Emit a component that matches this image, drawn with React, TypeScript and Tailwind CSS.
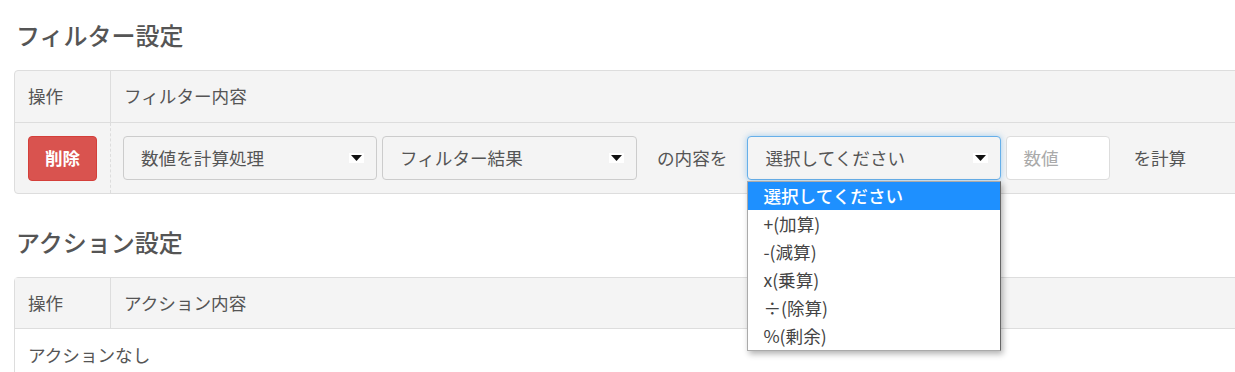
import React from "react";

const Arrow: React.FC = () => (
  <span className="flex h-[10px] w-[15px] items-center justify-center bg-white">
    <svg width="11" height="6" viewBox="0 0 11 6">
      <path d="M0 0 L11 0 L5.5 6 Z" fill="#111" />
    </svg>
  </span>
);

const Select: React.FC<{ label: string; width: string; focused?: boolean }> = ({ label, width, focused }) => (
  <div
    className={
      focused
        ? `flex h-[44px] ${width} items-center justify-between rounded-[4px] border border-[#66afe9] bg-[#f4f4f4] pl-[17px] pr-[12px] shadow-[0_0_6px_rgba(102,175,233,0.6)]`
        : `flex h-[44px] ${width} items-center justify-between rounded-[4px] border border-[#ccc] bg-[#f4f4f4] pl-[17px] pr-[12px]`
    }
  >
    <span>{label}</span>
    <Arrow />
  </div>
);

const options = ["選択してください", "+(加算)", "-(減算)", "x(乗算)", "÷(除算)", "%(剰余)"];

const App: React.FC = () => {
  return (
    <div className="h-[372px] w-[1235px] overflow-hidden bg-white font-['Noto_Sans_CJK_JP','Noto_Sans',sans-serif] text-[17.6px] text-[#555]">
      <div className="pl-[14px] pt-[22px]">
        {/* フィルター設定 */}
        <h2 className="pl-[2px] text-[24px] font-medium leading-[26px] text-[#555]">フィルター設定</h2>

        <div className="mt-[22px] w-[1240px] rounded-[4px] border border-[#ddd] bg-[#f4f4f4]">
          <div className="flex h-[52px] border-b border-[#ddd]">
            <div className="flex w-[96px] items-center border-r border-[#ddd] pl-[13px]">操作</div>
            <div className="flex items-center pl-[13px]">フィルター内容</div>
          </div>
          <div className="flex h-[70px]">
            <div className="flex w-[96px] items-center border-r border-dashed border-[#ddd] pl-[13px]">
              <button className="h-[45px] w-[69px] rounded-[4px] border border-[#d43f3a] bg-[#d9534f] font-bold text-white">
                削除
              </button>
            </div>
            <div className="flex items-center pl-[12px]">
              <Select label="数値を計算処理" width="w-[254px]" />
              <div className="ml-[5px]">
                <Select label="フィルター結果" width="w-[255px]" />
              </div>
              <span className="mx-[20px]">の内容を</span>
              <div className="relative">
                <Select label="選択してください" width="w-[254px]" focused />
                <ul className="absolute left-0 top-full z-10 mt-[1px] w-[254px] border border-[#aaa] border-r-[#666] bg-white shadow-[2px_3px_6px_rgba(0,0,0,0.3)]">
                  {options.map((o, i) => (
                    <li
                      key={o}
                      className={
                        i === 0
                          ? "flex h-[28px] items-center bg-[#1e90ff] pl-[15px] font-medium text-white"
                          : "flex h-[28px] items-center pl-[15px] text-[#444]"
                      }
                    >
                      {o}
                    </li>
                  ))}
                </ul>
              </div>
              <div className="ml-[5px] flex h-[44px] w-[104px] items-center rounded-[4px] border border-[#ddd] bg-white pl-[16px] text-[#aaa]">
                数値
              </div>
              <span className="ml-[23px]">を計算</span>
            </div>
          </div>
        </div>

        {/* アクション設定 */}
        <h2 className="mt-[35px] pl-[2px] text-[24px] font-medium leading-[26px] text-[#555]">アクション設定</h2>

        <div className="mt-[22px] w-[1240px] rounded-[4px] border border-[#ddd]">
          <div className="flex h-[51px] border-b border-[#ddd] bg-[#f4f4f4]">
            <div className="flex w-[96px] items-center border-r border-[#ddd] pl-[13px]">操作</div>
            <div className="flex items-center pl-[13px]">アクション内容</div>
          </div>
          <div className="flex h-[52px] items-center pl-[13px]">アクションなし</div>
        </div>
      </div>
    </div>
  );
};

export default App;
